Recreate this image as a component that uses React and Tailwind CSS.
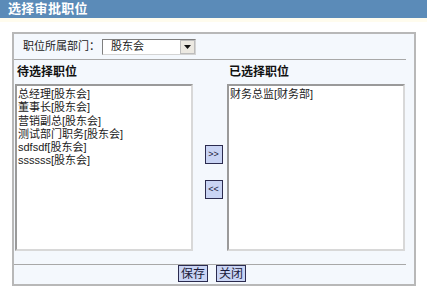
import React from "react";

const leftItems = [
  "总经理[股东会]",
  "董事长[股东会]",
  "营销副总[股东会]",
  "测试部门职务[股东会]",
  "sdfsdf[股东会]",
  "ssssss[股东会]",
];

const rightItems = ["财务总监[财务部]"];

function ListBox({ items }) {
  return (
    <div className="w-[178px] h-[167px] bg-white border-2 border-t-[#9a9a9a] border-l-[#9a9a9a] border-r-[#d8d8d8] border-b-[#d8d8d8] pl-[1px] pt-[2px] overflow-hidden">
      {items.map((item) => (
        <div key={item} className="h-[13.3px] leading-[13px] text-[11px] text-[#222] whitespace-nowrap">
          {item}
        </div>
      ))}
    </div>
  );
}

function SmallButton({ children, className = "" }) {
  return (
    <button
      className={`flex items-center justify-center bg-[#c9d4f4] border border-[#2b2b4f] text-[#1a1a3a] leading-none ${className}`}
    >
      {children}
    </button>
  );
}

export default function App() {
  return (
    <div
      className="w-[427px] h-[295px] bg-white overflow-hidden"
      style={{ fontFamily: '"Liberation Sans", "Noto Sans CJK SC", sans-serif' }}
    >
      {/* Title bar */}
      <div className="h-[18px] bg-[#5b8bb8] pl-[8px] flex items-center">
        <span className="text-[13px] font-bold text-white tracking-[0.3px]">选择审批职位</span>
      </div>
      <div className="h-[4px] bg-[#fffcee]" />

      {/* Main panel */}
      <div className="ml-[12px] mt-[10px] w-[404px] h-[254px] bg-[#f4f8fd] border-2 border-[#b8b8b8] flex flex-col">
        {/* Department row */}
        <div className="h-[26px] flex items-center pl-[9px] border-b border-[#a8a8a8] mr-[8px]">
          <span className="text-[11px] text-[#222]">职位所属部门：</span>
          <div className="ml-[2px] w-[94px] h-[16px] bg-white border border-t-[#7f7f7f] border-l-[#7f7f7f] border-r-[#d4d4d4] border-b-[#d4d4d4] flex items-center">
            <span className="flex-1 pl-[8px] text-[11px] text-[#222] leading-none">股东会</span>
            <div className="w-[15px] h-[14px] bg-[#ece9e2] border border-[#bdbdbd] flex items-center justify-center">
              <svg width="7" height="4" viewBox="0 0 7 4">
                <path d="M0 0h7L3.5 4z" fill="#111" />
              </svg>
            </div>
          </div>
        </div>

        {/* Headers */}
        <div className="h-[24px] flex items-center">
          <span className="pl-[3px] w-[215px] text-[12px] font-bold text-[#111]">待选择职位</span>
          <span className="text-[12px] font-bold text-[#111]">已选择职位</span>
        </div>

        {/* Lists */}
        <div className="flex pl-[1px]">
          <ListBox items={leftItems} />
          <div className="w-[34px] flex flex-col items-center pt-[61px] gap-[16px] pl-[7px]">
            <SmallButton className="w-[18px] h-[19px] text-[9px]">&gt;&gt;</SmallButton>
            <SmallButton className="w-[18px] h-[19px] text-[9px]">&lt;&lt;</SmallButton>
          </div>
          <ListBox items={rightItems} />
        </div>

        {/* Footer */}
        <div className="mt-[13px] mr-[8px] border-t border-[#a8a8a8] flex-1 flex justify-center items-start pl-[4px] gap-[8px]">
          <SmallButton className="w-[30px] h-[17px] text-[12px]">保存</SmallButton>
          <SmallButton className="w-[30px] h-[17px] text-[12px]">关闭</SmallButton>
        </div>
      </div>
    </div>
  );
}
